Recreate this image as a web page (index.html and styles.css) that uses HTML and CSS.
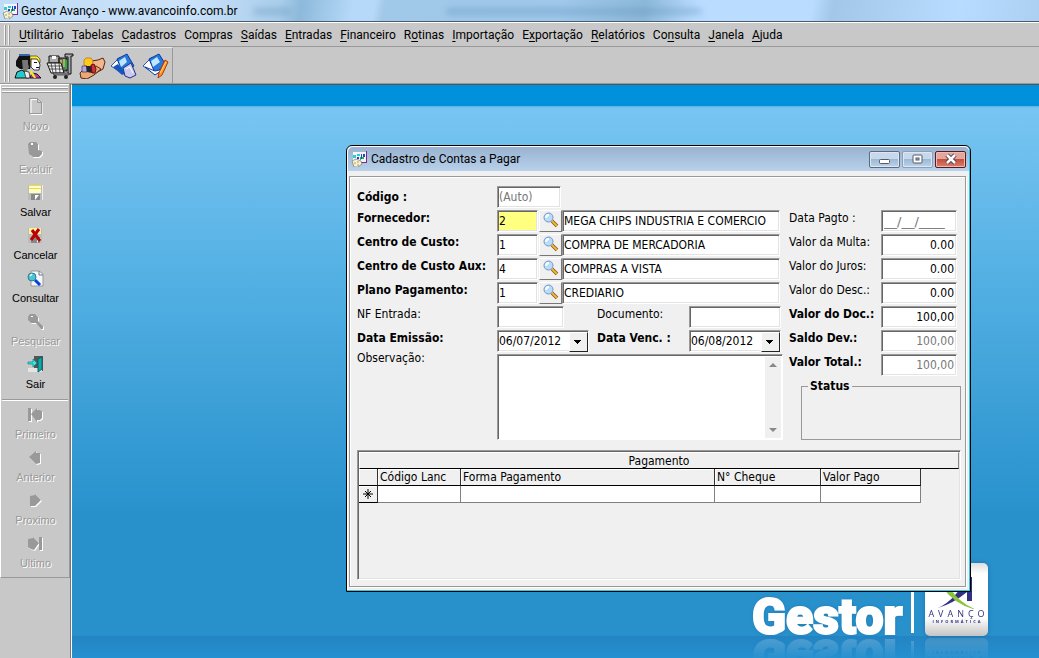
FILE: index.html
```html
<!DOCTYPE html>
<html lang="pt-BR">
<head>
<meta charset="utf-8">
<title>Gestor Avanço</title>
<link rel="stylesheet" href="styles.css">
</head>
<body>
<svg class="defs" width="0" height="0" aria-hidden="true">
  <symbol id="app" viewBox="0 0 16 16">
    <rect x="2" y="1" width="14" height="10" fill="#f4f4fa"/><path d="M15 0h1v12h-7v-1h6z" fill="#7a2a8a"/>
    <path d="M2 4h3v3h-3zM6 3h3v2h-3z" fill="#3cc"/><path d="M6 6h2v2h-2zM10 3h1v5h-1zM12 3h2v3h-2z" fill="#24c"/><path d="M9 6h1v3h-1zM11 6h2v2h-2z" fill="#2b4"/>
    <path d="M1 10l4-2 5 2 1 3-4 3H3z" fill="#f4f1d0" stroke="#777" stroke-width=".7"/><path d="M3 12h2M6 11h2M6 14h2" stroke="#b96"/>
  </symbol>
  <symbol id="lens" viewBox="0 0 18 18">
    <path d="M10 9l5 5" stroke="#8a5a16" stroke-width="3.500"/><path d="M10 9l5 5" stroke="#f4b43c" stroke-width="1.800"/>
    <circle cx="6.500" cy="5.500" r="4.500" fill="#b9dcf8" stroke="#6f98c4"/><path d="M4 6q0-3 3-3" stroke="#fff" stroke-width="2" fill="none"/>
  </symbol>
  <symbol id="first" viewBox="0 0 17 17"><path d="M1 2h3v13H1zM4 8l6-6v2h2l3 1v7l-2 2h-3v2z"/></symbol>
  <symbol id="prev" viewBox="0 0 17 17"><path d="M2 8l7-6v2h4v10l-4 1z"/></symbol>
  <symbol id="next" viewBox="0 0 17 17"><path d="M14 8L8 2v1L3 4v10h5z"/></symbol>
  <symbol id="last" viewBox="0 0 17 17"><path d="M12 2h3v13h-3zM12 8L6 2v1L1 4v8l3 2 3 1z"/></symbol>
</svg>

<header class="titlebar"><svg class="i16"><use href="#app"/></svg><span class="title">Gestor Avanço - www.avancoinfo.com.br</span><span class="haze short"></span><span class="haze long"></span></header>

<nav class="menubar">
  <span class="grip-v"></span>
  <button><u>U</u>tilitário</button><button><u>T</u>abelas</button><button><u>C</u>adastros</button><button>Co<u>m</u>pras</button><button><u>S</u>aídas</button><button><u>E</u>ntradas</button><button><u>F</u>inanceiro</button><button>R<u>o</u>tinas</button><button><u>I</u>mportação</button><button>E<u>x</u>portação</button><button><u>R</u>elatórios</button><button>Co<u>n</u>sulta</button><button><u>J</u>anela</button><button><u>A</u>juda</button>
</nav>

<div class="toolstrip">
  <div class="toolbar">
    <span class="grip-v"></span>
    <button aria-label="Clientes"><svg viewBox="0 0 28 26">
      <path d="M2 8l3-5 4-2h6l2 3v4l-1 8H6l-4-3z" fill="#111"/><path d="M5 1h10l1 2H5z" fill="#36a"/><path d="M8 7h6v4l1 3-2 4H9z" fill="#777"/>
      <path d="M16 3h7l3 3v4l-9-4v8h-1z" fill="#ffee26" stroke="#222" stroke-width=".6"/><path d="M17 6h6l2 3 1 3-1 5h-5l-3-3z" fill="#fff" stroke="#111" stroke-width=".8"/><path d="M20 9h3v1h-3zM22 14h3v1h-3z" fill="#111"/>
      <path d="M1 25l2-6 5-2 5 4 2 4z" fill="#2cc" stroke="#111"/><path d="M10 18l2 7h4l-1-6z" fill="#eee" stroke="#111" stroke-width=".7"/><path d="M16 25l2-5 5 1 4 4z" fill="#c3a" stroke="#111"/><path d="M17 17l3 4 2 4h-2l-4-5z" fill="#ee2"/></svg></button>
    <button aria-label="Produtos"><svg viewBox="0 0 28 26">
      <path d="M19 1h8v2h-2v18h-3V4h-3z" fill="#aaa" stroke="#111"/><path d="M3 3h10v7H3z" fill="#aaa" stroke="#111"/><path d="M6 3h4v3H6z" fill="#fff"/>
      <path d="M13 5h8v13h-8z" fill="#667" stroke="#111"/><path d="M15 7v8M18 6v8" stroke="#cc3" stroke-width="1.5"/><path d="M20 7v9" stroke="#2a5" stroke-width="2"/>
      <path d="M1 10h14l3 10H5z" fill="#f2f2f2" stroke="#111"/><path d="M2 13h14M3 16h14M5 10l2 10M9 10l1 10M13 10l1 10" stroke="#333" stroke-width=".8"/>
      <path d="M7 20h16v2H8z" fill="#999" stroke="#111" stroke-width=".6"/><circle cx="9" cy="24" r="2" fill="#222"/><circle cx="20" cy="24" r="2" fill="#222"/></svg></button>
    <button aria-label="Fornecedores"><svg viewBox="0 0 28 26">
      <path d="M13 8l7-1 5-2 2 4-2 7-7 4-6-3z" fill="#f2b58c" stroke="#5a2410"/><path d="M2 20l4-4 12-3 5 3-7 6-7 4-6-1z" fill="#e9a876" stroke="#5a2410"/>
      <path d="M6 7l2-2h5l2 3-1 5-4 1-4-2z" fill="#ffc91c" stroke="#b66a08" stroke-width=".7"/><path d="M4 13h5v6H4z" fill="#b7a4e6" stroke="#223" stroke-width=".6"/><path d="M8 13h6v7l-5-1z" fill="#223"/><path d="M13 12l3-1 2 5-1 4h-3z" fill="#c33" stroke="#611"/></svg></button>
    <button aria-label="Contas"><svg viewBox="0 0 28 26">
      <path d="M1 13L10 4l9 15-6 2z" fill="#fff" stroke="#359"/><path d="M7 6l10-5 7 12-11 7z" fill="#2a78dc" stroke="#0b3aa0"/><path d="M9 8l6-4 2 5-6 5z" fill="#bfe6ff"/><path d="M3 14l9 8 3-2-7-9z" fill="#1458bd"/>
      <path d="M13 15l8-5 5 12-6 3-5-2z" fill="#c9c9ee" stroke="#238"/><path d="M16 16l4-2 3 6" stroke="#fff" fill="none"/></svg></button>
    <button aria-label="Editar contas"><svg viewBox="0 0 28 26">
      <path d="M1 13L10 4l9 15-6 2z" fill="#fff" stroke="#359"/><path d="M7 6l10-5 7 11-11 8z" fill="#2a78dc" stroke="#0b3aa0"/><path d="M9 8l6-4 3 5-7 5z" fill="#bfe6ff"/><path d="M3 14l10 8 9-6-9 2z" fill="#fff" stroke="#0b3aa0"/>
      <path d="M23 7l3 2-6 13-4 3 1-5z" fill="#ff9a22" stroke="#b43410"/><path d="M24 9l-6 11" stroke="#ffd860"/></svg></button>
  </div>
</div>

<div class="workspace">
  <aside class="rail">
    <div class="rail-panel">
      <span class="grip-h"></span>
      <button disabled><svg viewBox="0 0 17 17"><path d="M4 16.500h11V5L11 1.500H4z" fill="none" stroke="#fff"/><path d="M2.500 .5h8l4 4v11h-12zM10.500 .5v4h4" fill="none" stroke="#999"/></svg><span>Novo</span></button>
      <button disabled><svg class="dim" viewBox="0 0 17 17"><path d="M1 3l2-2h6l2 2v6l4 1v3l-3 3H6l-4-3z"/><path d="M4 2h2v2H4z" fill="#fff"/></svg><span>Excluir</span></button>
      <button><svg viewBox="0 0 17 17"><path d="M1 1h14v15H1z" fill="#bbb"/><path d="M2 1h12v8H2z" fill="#ffffc4"/><path d="M2 1h12v1H2zM2 4h12v1H2z" fill="#f3d548"/><path d="M4 10h9v6H4z" fill="#888"/><path d="M8 11h4l-4 5z" fill="#fff"/><path d="M15 1h1v15h-1z" fill="#eee"/></svg><span>Salvar</span></button>
      <button><svg viewBox="0 0 17 17"><path d="M1 1h14v15H1z" fill="#bbb"/><path d="M2 1h12v6H2z" fill="#fff1a0"/><path d="M4 10h9v6H4z" fill="#888"/><path d="M10 11h4l-4 5z" fill="#fff"/><path d="M5 3l8 11M12 2L4 13" stroke="#b80000" stroke-width="3"/></svg><span>Cancelar</span></button>
      <button><svg viewBox="0 0 17 17"><path d="M4 1h8l4 3v12H4z" fill="#f4f6ff" stroke="#999"/><path d="M12 1v4h4" stroke="#777" fill="none"/><path d="M8 10l5 5" stroke="#04d" stroke-width="3"/><circle cx="5" cy="7" r="4" fill="#4cc4d4" stroke="#28808e"/><path d="M3 6l2-2" stroke="#fff" stroke-width="1.500"/></svg><span>Consultar</span></button>
      <button disabled><svg class="dim" viewBox="0 0 17 17"><path d="M3 1h5l3 3v4l5 5v3h-2L9 10H4L1 7V4z"/><path d="M4 3h2v1H4z" fill="#fff"/></svg><span>Pesquisar</span></button>
      <button><svg viewBox="0 0 17 17"><path d="M7 0h9v15H7z" fill="#555"/><path d="M1 12h14v4H1z" fill="#e4e4e4"/><path d="M11 3l4-2v12l-4 3z" fill="#12a8a8" stroke="#066"/><path d="M1 6h5V3l4 4-4 4V8H1z" fill="#3fe2e2" stroke="#088" stroke-width=".7"/></svg><span>Sair</span></button>
      <hr>
      <button disabled><svg class="dim"><use href="#first"/></svg><span>Primeiro</span></button>
      <button disabled><svg class="dim"><use href="#prev"/></svg><span>Anterior</span></button>
      <button disabled><svg class="dim"><use href="#next"/></svg><span>Proximo</span></button>
      <button disabled><svg class="dim"><use href="#last"/></svg><span>Ultimo</span></button>
    </div>
  </aside>

  <main class="desktop">
    <div class="brand">
      <span class="brand-name">Gestor</span><span class="brand-bar"></span>
      <div class="brand-card">
        <svg viewBox="0 0 62 44"><path d="M12 43Q31 34 40 12h6v24h-5V27Q28 38 12 43z" fill="#332f83"/><path d="M17 23Q29 40 51 45Q33 38 24 23z" fill="#8ac43c"/></svg>
        <span class="brand-title">AVANÇO</span><span class="brand-sub">INFORMÁTICA</span>
      </div>
    </div>

    <section class="dialog" aria-label="Cadastro de Contas a Pagar">
      <div class="dialog-bar"><svg class="i16"><use href="#app"/></svg><span class="title">Cadastro de Contas a Pagar</span>
        <button class="win" aria-label="Minimizar"><svg viewBox="0 0 14 12"><rect x="1.500" y="6.500" width="10" height="4" rx="1" fill="#fff" stroke="#555b6b"/></svg></button>
        <button class="win" aria-label="Maximizar"><svg viewBox="0 0 14 12"><rect x="2" y="2" width="9" height="8" rx="1" fill="#fff" stroke="#555b6b"/><rect x="5" y="5" width="3" height="2" fill="#9bb8d8" stroke="#555b6b"/></svg></button>
        <button class="win close" aria-label="Fechar"><svg viewBox="0 0 14 12"><path d="M3 2l8 8M11 2l-8 8" stroke="#4b3a48" stroke-width="4.500"/><path d="M3 2l8 8M11 2l-8 8" stroke="#fff" stroke-width="2.500"/></svg></button>
      </div>
      <form class="frame">
        <div class="columns">
          <div class="left">
            <div class="row"><label class="lead bold" for="cod">Código :</label><input id="cod" class="w64 muted" value="(Auto)" readonly></div>
            <div class="row"><label class="lead bold" for="forn">Fornecedor:</label><input id="forn" class="w41 active" value="2"><button type="button" class="find" aria-label="Buscar fornecedor"><svg><use href="#lens"/></svg></button><input class="name" aria-label="Nome do fornecedor" value="MEGA CHIPS INDUSTRIA E COMERCIO"></div>
            <div class="row"><label class="lead bold" for="cc">Centro de Custo:</label><input id="cc" class="w41" value="1"><button type="button" class="find" aria-label="Buscar centro de custo"><svg><use href="#lens"/></svg></button><input class="name" aria-label="Nome do centro de custo" value="COMPRA DE MERCADORIA"></div>
            <div class="row"><label class="lead bold" for="cca">Centro de Custo Aux:</label><input id="cca" class="w41" value="4"><button type="button" class="find" aria-label="Buscar centro de custo auxiliar"><svg><use href="#lens"/></svg></button><input class="name" aria-label="Nome do centro auxiliar" value="COMPRAS A VISTA"></div>
            <div class="row"><label class="lead bold" for="pp">Plano Pagamento:</label><input id="pp" class="w41" value="1"><button type="button" class="find" aria-label="Buscar plano"><svg><use href="#lens"/></svg></button><input class="name" aria-label="Nome do plano" value="CREDIARIO"></div>
            <div class="row"><label class="lead" for="nf">NF Entrada:</label><span class="slot"><input id="nf" class="w67"></span><label class="mid" for="doc">Documento:</label><input id="doc" class="w92"></div>
            <div class="row"><label class="lead bold" for="em">Data Emissão:</label><span class="slot"><span class="combo"><select id="em"><option>06/07/2012</option></select></span></span><label class="mid bold" for="ve">Data Venc. :</label><span class="combo"><select id="ve"><option>06/08/2012</option></select></span></div>
            <div class="row memo"><label class="lead" for="obs">Observação:</label><div class="memo-box"><textarea id="obs"></textarea><span class="scroll"><i class="up"></i><i class="down"></i></span></div></div>
          </div>
          <div class="right">
            <div class="row"><label for="dp">Data Pagto :</label><input id="dp" class="muted date" value="__/__/____"></div>
            <div class="row"><label for="vm">Valor da Multa:</label><input id="vm" value="0.00"></div>
            <div class="row"><label for="vj">Valor do Juros:</label><input id="vj" value="0.00"></div>
            <div class="row"><label for="vd">Valor do Desc.:</label><input id="vd" value="0.00"></div>
            <div class="row"><label class="bold" for="vdoc">Valor do Doc.:</label><input id="vdoc" value="100,00"></div>
            <div class="row"><label class="bold" for="sd">Saldo Dev.:</label><input id="sd" class="muted" value="100,00" readonly></div>
            <div class="row"><label class="bold" for="vt">Valor Total.:</label><input id="vt" class="muted" value="100,00" readonly></div>
            <fieldset class="status"><legend class="bold">Status</legend></fieldset>
          </div>
        </div>
        <div class="grid">
          <div class="grid-title">Pagamento</div>
          <table>
            <colgroup><col class="c0"><col class="c1"><col class="c2"><col class="c3"><col class="c4"></colgroup>
            <thead><tr><th></th><th>Código Lanc</th><th>Forma Pagamento</th><th>N° Cheque</th><th>Valor Pago</th></tr></thead>
            <tbody><tr><th><svg viewBox="0 0 10 10"><path d="M5 0v10M0 5h10M2 2l6 6M8 2L2 8" stroke="#000" stroke-width="1"/></svg></th><td></td><td></td><td></td><td></td></tr></tbody>
          </table>
        </div>
      </form>
    </section>
  </main>
</div>
</body>
</html>
```
FILE: styles.css
```css
* { box-sizing: border-box; }
body { margin: 0; height: 100vh; display: flex; flex-direction: column; overflow: hidden; background: #c8c8c8; color: #000; font: 12px/16px "DejaVu Sans Condensed", "DejaVu Sans", sans-serif; }
button, input, select, textarea { font: inherit; color: inherit; margin: 0; }
button { padding: 0; border: 0; background: none; }
.defs { position: absolute; }
.i16 { width: 16px; height: 16px; flex: none; }
.bold { font-weight: bold; }
.title { font: 12px/16px Roboto, "Open Sans", sans-serif; }

.titlebar { flex: none; height: 23px; padding: 3px 2px; display: flex; align-items: center; gap: 3px; border-bottom: 1px solid #fff; box-shadow: inset 0 -1px #4c5a6c; background: linear-gradient(100deg, #bfdcf6 0%, #cbe2fa 18%, #a9cdea 27%, #8db9da 29%, #b6d9f9 34%, #b6d9f9 36%, #a0c8e8 37%, #9fc8ea 54%, #8cb8d8 62%, #b9dcff 67%, #b9dcff 78%, #a2c7e8 80%, #b8dcff 92%, #acd0f2 100%); }
.haze { height: 7px; border-radius: 4px; background: #5c8db8; opacity: .35; filter: blur(3px); }
.haze.short { width: 38px; margin-left: 12px; }
.haze.long { width: 256px; margin-left: 152px; }
.menubar { flex: none; height: 24px; display: flex; align-items: center; gap: 8px; padding-left: 4px; border-bottom: 1px solid #999; font: 12px/16px Roboto, "Open Sans", sans-serif; }
.menubar u { text-underline-offset: 2px; }
.grip-v { width: 5px; height: 20px; flex: none; border: solid #f6f6f6; border-width: 0 1px; box-shadow: 1px 0 #999, inset 1px 0 #999; }
.menubar .grip-v { margin-right: 2px; }
.toolstrip { flex: none; height: 37px; display: flex; border-bottom: 1px solid #999; }
.toolbar { display: flex; align-items: center; gap: 4px; padding: 0 2px 0 4px; border-top: 1px solid #eee; border-right: 1px solid #999; }
.toolbar .grip-v { height: 32px; }
.toolbar .grip-v + button { margin-left: 1px; }
.toolbar svg { display: block; width: 28px; height: 26px; }

.workspace { flex: 1; min-height: 0; display: flex; }
.rail { flex: none; width: 71px; border-right: 1px solid #777; }
.rail-panel { display: flex; flex-direction: column; padding: 3px 1px 3px 0; border-left: 1px solid #fff; border-right: 1px solid #999; border-bottom: 1px solid #999; box-shadow: inset 0 1px #fff; }
.grip-h { height: 5px; margin: 0 0 2px 1px; border: solid #fff; border-width: 1px 0; box-shadow: 0 1px #999, inset 0 1px #999; }
.rail button { height: 43px; padding: 4px 0 0 2px; display: flex; flex-direction: column; align-items: center; gap: 3px; font: 11px/16px "Liberation Sans", sans-serif; color: #000; }
.rail svg { width: 17px; height: 17px; flex: none; }
.rail button:disabled { color: #999; text-shadow: 1px 1px #fff; }
.rail .dim { fill: #999; filter: drop-shadow(1px 1px 0 #fff); }
.rail hr { width: 66px; height: 2px; margin: 4px 0 1px 1px; border: 0; border-top: 1px solid #999; background: #fff; }

.desktop { position: relative; flex: 1; border-top: 1px solid #555; border-left: 1px solid #fff; overflow: hidden; background: linear-gradient(#0091dd 21px, #55b3ea 21px, #78c5f2 23px, #50aee2 210px, #2891cc 430px, #2891cc 551px, #2384c3 551px, #2590cf 100%); }
.brand { position: absolute; left: 680px; top: 478px; display: flex; height: 73px; align-items: flex-end; -webkit-box-reflect: below 2px linear-gradient(transparent 70%, rgba(0, 0, 0, .2)); }
.brand-name { width: 152px; font: 900 50px/38px Roboto, "DejaVu Sans Condensed", sans-serif; color: #fff; -webkit-text-stroke: 2px #fff; text-shadow: 0 0 4px #1c6fa8; }
.brand-bar { width: 3px; height: 46px; margin: 0 11px 3px 7px; background: #fff; }
.brand-card { width: 63px; height: 73px; padding-top: 2px; border-radius: 5px; display: flex; flex-direction: column; align-items: center; background: linear-gradient(#ddd, #fff 15%, #fff 75%, #c4c4c4); box-shadow: 0 0 4px #1c6fa8; color: #332f83; }
.brand-card svg { width: 62px; height: 44px; }
.brand-title { font: 9px/10px "Open Sans", sans-serif; letter-spacing: 4px; margin-right: -4px; }
.brand-sub { font: bold 4px/4px "Open Sans", sans-serif; letter-spacing: 2px; margin: 1px -2px 0 0; }

.dialog { position: absolute; left: 274px; top: 60px; width: 625px; height: 447px; display: flex; flex-direction: column; border: 1px solid #000; border-radius: 6px 6px 0 0; background: #f0f0f0; box-shadow: inset -1px -1px #2cc9e8, inset 1px 1px #fff; }
.dialog-bar { flex: none; height: 24px; margin: 1px 1px 0; padding: 0 3px 0 3px; display: flex; align-items: center; gap: 4px; border-radius: 5px 5px 0 0; background: linear-gradient(#98b2d0, #b9d1ea); }
.dialog-bar .title { margin-right: auto; }
.win { width: 31px; height: 17px; display: grid; place-items: center; border: 1px solid #5d6b7d; border-radius: 2px; background: linear-gradient(#c6d8ea 45%, #9db9d6 50%, #bcd3ea); box-shadow: inset 0 0 0 1px #dbe7f3; }
.win:nth-of-type(2) { border-color: #8c9fb8; }
.win.close { border-color: #5a1820; background: linear-gradient(#e4a59a 45%, #c4503e 50%, #d8806a); box-shadow: inset 0 0 0 1px #ecbdb4; }
.dialog-bar .win svg { width: 14px; height: 12px; }
.win + .win { margin-left: -2px; }
.frame { flex: 1; margin: 5px 4px 4px 2px; padding: 9px 4px 6px 7px; border: 1px solid #999; box-shadow: inset 1px 1px #fff, 1px 1px #fff; display: flex; flex-direction: column; gap: 10px; }
.columns { display: flex; gap: 6px; height: 254px; }
.left { width: 426px; display: flex; flex-direction: column; gap: 2px; }
.right { flex: 1; padding-top: 24px; display: flex; flex-direction: column; gap: 2px; }
.row { display: flex; height: 22px; }
.lead { width: 140px; flex: none; }
.left .row:first-child label { padding-top: 3px; }
.mid { width: 92px; }
.slot { width: 100px; }
input, textarea, .combo { height: 22px; padding: 0 2px 0 1px; border: 1px solid; border-color: #999 #fff #fff #999; box-shadow: inset 1px 1px #666, inset -1px -1px #e3e3e3; border-radius: 0; background: #fff; outline: 0; font-size: 12px; }
.w64 { width: 64px; } .w41 { width: 41px; } .w67 { width: 67px; } .w92 { width: 92px; }
.muted { color: #777; }
.active { background: #ffff80; }
.name { width: 218px; }
.find { width: 23px; height: 22px; margin: 0 0 0 1px; display: grid; place-items: center; border: 1px solid; border-color: #fff #777 #777 #fff; background: #f0f0f0; }
.find svg { width: 18px; height: 18px; }
.combo { position: relative; display: block; width: 92px; padding-right: 1px; }
.combo select { width: 100%; height: 20px; padding: 0; border: 0; appearance: none; background: transparent; outline: 0; }
.combo::after { content: ""; position: absolute; right: 0; top: 1px; width: 17px; height: 18px; pointer-events: none; border: 1px solid; border-color: #fff #222 #222 #fff; background: linear-gradient(#000, #000) 4px 7px / 7px 1px no-repeat, linear-gradient(#000, #000) 5px 8px / 5px 1px no-repeat, linear-gradient(#000, #000) 6px 9px / 3px 1px no-repeat, linear-gradient(#000, #000) 7px 10px / 1px 1px no-repeat, #f0f0f0; }
.memo { height: 86px; }
.memo label { line-height: 8px; }
.memo-box { flex: 1; display: flex; border: 1px solid; border-color: #999 #fff #fff #999; box-shadow: inset 1px 1px #666; padding: 2px 1px 1px 2px; background: #fff; background-clip: padding-box; }
.memo textarea { flex: 1; min-width: 0; height: 100%; border: 0; box-shadow: none; resize: none; background: transparent; }
.scroll { width: 16px; padding: 6px 4px; display: flex; flex-direction: column; justify-content: space-between; background: #f0f0f0; }
.scroll i { border: solid transparent; border-width: 0 4px; }
.scroll .up { border-bottom: 4px solid #888; }
.scroll .down { border-top: 4px solid #888; }
.right label { width: 92px; flex: none; white-space: nowrap; }
.right input { width: 76px; text-align: right; }
.right .date { text-align: left; font: 13px "DejaVu Sans", sans-serif; padding-left: 2px; }
.status { width: 160px; height: 66px; margin: 0 0 0 12px; padding: 0; border: 1px solid #999; }
.status legend { margin-left: 6px; padding: 0 2px; }
.grid { flex: 1; border: 1px solid; border-color: #999 #fff #fff #999; box-shadow: inset 1px 1px #666, inset -1px -1px #e3e3e3; padding: 1px; }
.grid-title { height: 17px; line-height: 16px; text-align: center; border: 1px solid; border-color: #fff #888 #000 #fff; }
.grid table { width: 562px; table-layout: fixed; border-collapse: separate; border-spacing: 0; }
.c0 { width: 19px; } .c1 { width: 83px; } .c2 { width: 254px; } .c3 { width: 106px; }
.grid th, .grid td { height: 17px; padding: 0 2px; font-weight: normal; text-align: left; line-height: 14px; white-space: nowrap; }
.grid th { background: #f0f0f0; border-right: 1px solid #333; border-bottom: 1px solid #000; box-shadow: inset 1px 1px #fff; }
.grid td { height: 16px; background: #fff; border-right: 1px solid #808080; border-bottom: 1px solid #808080; }
.grid th svg { display: block; width: 10px; height: 10px; margin: 0 auto; }
```
